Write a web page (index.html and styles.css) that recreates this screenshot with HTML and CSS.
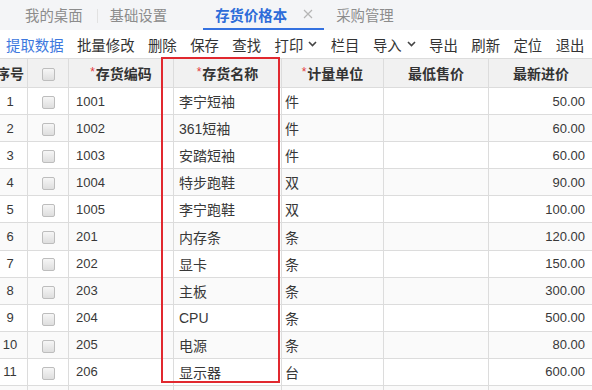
FILE: index.html
```html
<!DOCTYPE html>
<html lang="zh-CN">
<head>
  <meta charset="UTF-8" />
  <title>存货价格本</title>
  <link rel="stylesheet" href="styles.css">
</head>
<body>

  <!-- Tabs -->
  <div class="tabs">
    <div class="tab tab-first">我的桌面</div>
    <div class="tab">基础设置</div>
    <div class="tab active">存货价格本
      <svg class="close" width="10" height="10" viewBox="0 0 10 10"><path d="M1 1L9 9M9 1L1 9" /></svg>
    </div>
    <div class="tab">采购管理</div>
  </div>

  <!-- Toolbar -->
  <div class="toolbar">
    <span class="tool primary">提取数据</span>
    <span class="tool">批量修改</span>
    <span class="tool">删除</span>
    <span class="tool">保存</span>
    <span class="tool">查找</span>
    <span class="tool">打印<svg class="caret" width="9" height="6" viewBox="0 0 9 6"><path d="M1 1L4.5 4.5L8 1" /></svg></span>
    <span class="tool">栏目</span>
    <span class="tool">导入<svg class="caret" width="9" height="6" viewBox="0 0 9 6"><path d="M1 1L4.5 4.5L8 1" /></svg></span>
    <span class="tool">导出</span>
    <span class="tool">刷新</span>
    <span class="tool">定位</span>
    <span class="tool">退出</span>
  </div>

  <!-- Grid -->
  <div class="grid-wrap">
    <table class="grid">
      <colgroup>
        <col style="width:35px"><col style="width:41px"><col style="width:105px"><col style="width:108px">
        <col style="width:102px"><col style="width:105px"><col style="width:105px">
      </colgroup>
      <thead>
        <tr>
          <th>序号</th>
          <th><span class="check"></span></th>
          <th><span class="req">*</span>存货编码</th>
          <th><span class="req">*</span>存货名称</th>
          <th><span class="req">*</span>计量单位</th>
          <th>最低售价</th>
          <th>最新进价</th>
        </tr>
      </thead>
      <tbody id="rows"></tbody>
    </table>
    <div class="mark"></div>
  </div>

  <script>
    const items = [
      ['1001', '李宁短袖', '件', '50.00'],
      ['1002', '361短袖', '件', '60.00'],
      ['1003', '安踏短袖', '件', '60.00'],
      ['1004', '特步跑鞋', '双', '90.00'],
      ['1005', '李宁跑鞋', '双', '100.00'],
      ['201', '内存条', '条', '120.00'],
      ['202', '显卡', '条', '150.00'],
      ['203', '主板', '条', '300.00'],
      ['204', 'CPU', '条', '500.00'],
      ['205', '电源', '条', '80.00'],
      ['206', '显示器', '台', '600.00'],
      ['', '', '', '']
    ];

    let html = '';
    items.forEach(function (it, i) {
      html += '<tr>' +
        '<td class="no">' + (it[0] ? i + 1 : '') + '</td>' +
        '<td class="center">' + (it[0] ? '<span class="check"></span>' : '') + '</td>' +
        '<td class="code">' + it[0] + '</td>' +
        '<td class="name">' + it[1] + '</td>' +
        '<td class="unit">' + it[2] + '</td>' +
        '<td></td>' +
        '<td class="price">' + it[3] + '</td>' +
        '</tr>';
    });
    document.getElementById('rows').innerHTML = html;
  </script>

</body>
</html>
```

FILE: styles.css
```css
body { margin: 0; width: 592px; height: 390px; overflow: hidden; background: #fff; font-family: "Liberation Sans", "Noto Sans CJK SC", sans-serif; color: #333; }

.tabs { display: flex; height: 30px; background: #f4f5f7; box-sizing: border-box; }
.tab { display: flex; align-items: center; padding: 0 12px; font-size: 14.4px; color: #8c8c8c; box-sizing: border-box; border-bottom: 2px solid transparent; }
.tab-first { margin-left: 13px; padding-right: 15px; position: relative; }
.tab-first::after { content: ""; position: absolute; right: 0; top: 9px; height: 14px; border-right: 1px solid #e2e2e2; }
.tab.active { margin-left: 24px; padding-right: 11px; color: #2d6cd9; font-weight: 600; border-bottom-color: #3471e0; }
.close { margin-left: 16px; }
.close path { stroke: #b5b5b5; stroke-width: 1.2; fill: none; }

.toolbar { display: flex; align-items: center; gap: 13.4px; height: 28px; padding-left: 6px; background: #fff; font-size: 14.4px; white-space: nowrap; }
.tool { display: flex; align-items: center; color: #333; }
.tool.primary { color: #3d78de; }
.caret { margin-left: 5px; }
.caret path { stroke: #444; stroke-width: 1.6; fill: none; }

.grid-wrap { position: relative; }
.grid { border-collapse: collapse; table-layout: fixed; width: 601px; margin-left: -8px; }
.grid th, .grid td { border: 1px solid #dcdcdc; padding: 0; overflow: hidden; white-space: nowrap; }
.grid th { height: 28px; background: #f1f1f1; font-size: 14px; font-weight: bold; color: #333; text-align: center; }
.grid td { height: 26.1px; font-size: 14px; color: #383838; }
.grid tbody tr:nth-child(even) td { background: #fafafa; }
.req { color: #e4393c; font-size: 12px; font-weight: normal; vertical-align: 3px; margin-right: 1px; }

.no { text-align: center; font-size: 13px !important; }
.center { text-align: center; }
.code { padding-left: 7px !important; font-size: 13px !important; }
.name { padding-left: 5px !important; }
.unit { padding-left: 3px !important; }
.price { text-align: right; padding-right: 8px !important; font-size: 13px !important; }

.check { display: inline-block; width: 11px; height: 11px; border: 1px solid #bdbdbd; border-radius: 2px; background: linear-gradient(#f6f6f6, #dedede); vertical-align: middle; }

.mark { position: absolute; left: 161px; top: -1px; width: 119px; height: 326px; border: 2.5px solid #e1282f; box-sizing: border-box; }
```
